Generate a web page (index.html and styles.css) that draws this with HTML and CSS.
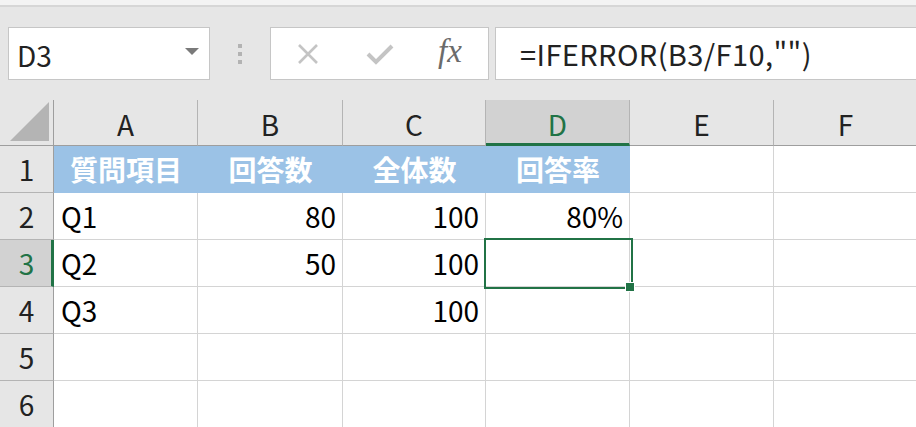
FILE: index.html
```html
<!DOCTYPE html>
<html lang="ja">
<head>
<meta charset="utf-8">
<title>Excel</title>
<link rel="stylesheet" href="styles.css">
</head>
<body>
<div class="topbar"></div>
<div class="toolbar">
  <div class="namebox">
    <span class="name">D3</span>
    <svg class="dd" width="14" height="8" viewBox="0 0 14 8"><polygon points="0,0 14,0 7,7" fill="#7a7a7a"/></svg>
  </div>
  <div class="grip"><i></i><i></i><i></i></div>
  <div class="fbtns">
    <svg class="ico" width="24" height="24" viewBox="0 0 24 24"><path d="M3 3 L21 21 M21 3 L3 21" stroke="#c4c4c4" stroke-width="2.6" fill="none"/></svg>
    <svg class="ico" width="28" height="24" viewBox="0 0 28 24"><path d="M2 12 L10 20 L26 4" stroke="#c4c4c4" stroke-width="4" fill="none"/></svg>
    <span class="fx">fx</span>
  </div>
  <div class="formula">=IFERROR(B3/F10,"")</div>
</div>
<div class="sheet">
  <div class="grid">
    <div class="corner"><svg width="40" height="40" viewBox="0 0 40 40"><polygon points="39,0 39,39 0,39" fill="#b4b4b4"/></svg></div>
    <div class="ch">A</div><div class="ch">B</div><div class="ch">C</div><div class="ch sel">D</div><div class="ch">E</div><div class="ch">F</div>

    <div class="rh">1</div>
    <div class="c hd">質問項目</div><div class="c hd">回答数</div><div class="c hd">全体数</div><div class="c hd">回答率</div><div class="c"></div><div class="c"></div>

    <div class="rh">2</div>
    <div class="c">Q1</div><div class="c r">80</div><div class="c r">100</div><div class="c r">80%</div><div class="c"></div><div class="c"></div>

    <div class="rh sel">3</div>
    <div class="c">Q2</div><div class="c r">50</div><div class="c r">100</div><div class="c r"></div><div class="c"></div><div class="c"></div>

    <div class="rh">4</div>
    <div class="c">Q3</div><div class="c r"></div><div class="c r">100</div><div class="c"></div><div class="c"></div><div class="c"></div>

    <div class="rh">5</div>
    <div class="c"></div><div class="c"></div><div class="c"></div><div class="c"></div><div class="c"></div><div class="c"></div>

    <div class="rh">6</div>
    <div class="c"></div><div class="c"></div><div class="c"></div><div class="c"></div><div class="c"></div><div class="c"></div>
  </div>
  <div class="selection"><div class="handle"></div></div>
</div>
</body>
</html>
```
FILE: styles.css
```css
html, body {
  margin: 0;
  padding: 0;
  background: #ffffff;
  overflow: hidden;
  font-family: "Noto Sans CJK JP", "Noto Sans", sans-serif;
  color: #000;
}
.topbar {
  height: 5px;
  background: #f3f3f3;
  border-bottom: 2px solid #d6d6d6;
}
.toolbar {
  height: 93px;
  box-sizing: border-box;
  background: #e6e6e6;
  padding: 20px 0 0 8px;
  display: flex;
  align-items: flex-start;
}
.namebox {
  width: 202px;
  height: 53px;
  box-sizing: border-box;
  background: #fff;
  border: 1px solid #c6c6c6;
  display: flex;
  align-items: center;
  justify-content: space-between;
  padding: 0 10px 0 8px;
}
.name {
  font-size: 28px;
  color: #222;
  line-height: 1;
  padding-top: 3px;
}
.dd { margin-top: -4px; }
.grip {
  width: 60px;
  height: 53px;
  display: flex;
  flex-direction: column;
  align-items: center;
  justify-content: center;
  gap: 4px;
}
.grip i {
  display: block;
  width: 4px;
  height: 4px;
  background: #b3b3b3;
}
.fbtns {
  width: 219px;
  height: 53px;
  box-sizing: border-box;
  background: #fff;
  border: 1px solid #c6c6c6;
  display: flex;
  align-items: center;
  padding-left: 25px;
}
.fbtns .ico { flex: none; }
.fbtns .ico + .ico { margin-left: 46px; }
.fx {
  margin-left: 44px;
  font-family: "Liberation Serif", serif;
  font-style: italic;
  font-size: 33px;
  color: #6b6b6b;
  line-height: 1;
  margin-top: -4px;
}
.formula {
  flex: 1;
  margin-left: 6px;
  margin-right: -2px;
  height: 53px;
  box-sizing: border-box;
  background: #fff;
  border: 1px solid #c6c6c6;
  font-size: 29px;
  letter-spacing: 0.4px;
  color: #222;
  line-height: 51px;
  padding-left: 24px;
  white-space: nowrap;
}
.sheet {
  position: relative;
}
.grid {
  display: grid;
  grid-template-columns: 54px 144px 145px 143px 144px 144px 144px;
  grid-template-rows: 46px repeat(6, 47px);
}
.corner {
  background: #e6e6e6;
  border-right: 1px solid #9e9e9e;
  border-bottom: 1px solid #9e9e9e;
  box-sizing: border-box;
  display: flex;
  align-items: flex-end;
  justify-content: flex-end;
  padding: 0 3px 3px 0;
}
.ch {
  background: #e6e6e6;
  border-right: 1px solid #b4b4b4;
  border-bottom: 1px solid #9e9e9e;
  box-sizing: border-box;
  display: flex;
  align-items: center;
  justify-content: center;
  font-size: 28px;
  color: #222;
  padding-top: 2px;
}
.ch.sel {
  background: #d2d2d2;
  color: #217346;
  border-bottom: 3px solid #217346;
  padding-top: 4px;
}
.rh {
  background: #e6e6e6;
  border-right: 1px solid #9e9e9e;
  border-bottom: 1px solid #b4b4b4;
  box-sizing: border-box;
  display: flex;
  align-items: center;
  justify-content: center;
  font-size: 28px;
  color: #222;
}
.rh.sel {
  background: #d2d2d2;
  color: #217346;
  border-right: 3px solid #217346;
  padding-left: 2px;
}
.c {
  border-right: 1px solid #d4d4d4;
  border-bottom: 1px solid #d4d4d4;
  box-sizing: border-box;
  display: flex;
  align-items: center;
  padding: 0 6px 0 7px;
  font-size: 28px;
  white-space: nowrap;
}
.c.r { justify-content: flex-end; }
.c.hd {
  background: #9bc2e6;
  border-color: #9bc2e6;
  color: #fff;
  font-weight: 700;
  justify-content: center;
}
.selection {
  position: absolute;
  left: 484px;
  top: 138px;
  width: 149px;
  height: 51px;
  box-sizing: border-box;
  border: 2px solid #217346;
}
.handle {
  position: absolute;
  left: 140px;
  top: 43px;
  width: 8px;
  height: 8px;
  background: #217346;
  outline: 1px solid #fff;
}
```
